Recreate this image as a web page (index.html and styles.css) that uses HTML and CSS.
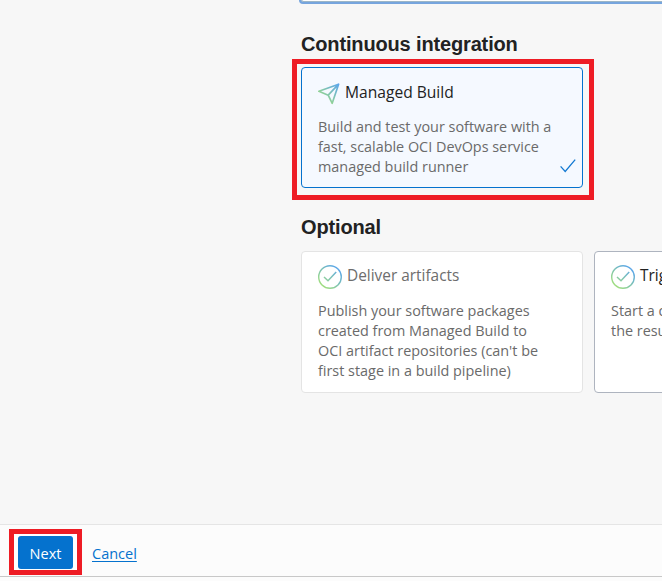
FILE: index.html
```html
<!DOCTYPE html>
<html lang="en">
<head>
<meta charset="utf-8">
<title>Add stage</title>
<link rel="stylesheet" href="styles.css">
</head>
<body>
<svg class="defs" width="0" height="0" aria-hidden="true">
  <defs>
    <linearGradient id="tint" gradientUnits="userSpaceOnUse" x1="4" y1="22" x2="21" y2="3">
      <stop offset="0" stop-color="#a3e07a"/>
      <stop offset="1" stop-color="#5aa5ee"/>
    </linearGradient>
  </defs>
</svg>
<main class="stages">
  <div class="previous-card"></div>
  <h2 class="heading">Continuous integration</h2>
  <section class="card selected">
    <h3 class="card-title managed">
      <svg class="icon" width="24" height="24" viewBox="0 0 24 24"><path d="M.9 10.3 20.6 3.2 14.2 22.3 10.2 14.2ZM10.2 14.2 20.6 3.2" fill="none" stroke="url(#tint)" stroke-width="1.7" stroke-linejoin="round"/></svg>
      <span>Managed Build</span>
    </h3>
    <p class="description">Build and test your software with a<br>fast, scalable OCI DevOps service<br>managed build runner</p>
    <svg class="selected-mark" width="16" height="14" viewBox="0 0 16 14"><path d="M.6 7.4 5.2 12.4 15.2.7" fill="none" stroke="#1279d2" stroke-width="1.3"/></svg>
    <div class="highlight"></div>
  </section>
  <h2 class="heading optional">Optional</h2>
  <div class="row">
    <section class="card disabled">
      <h3 class="card-title">
        <svg class="icon" width="24" height="24" viewBox="0 0 24 24"><path d="M6 12 10 15.8 18.2 7" fill="none" stroke="url(#tint)" stroke-width="1.5"/><circle cx="12" cy="12" r="11.3" fill="none" stroke="url(#tint)" stroke-width="1.4"/></svg>
        <span>Deliver artifacts</span>
      </h3>
      <p class="description">Publish your software packages<br>created from Managed Build to<br>OCI artifact repositories (can't be<br>first stage in a build pipeline)</p>
    </section>
    <section class="card">
      <h3 class="card-title">
        <svg class="icon" width="24" height="24" viewBox="0 0 24 24"><path d="M6 12 10 15.8 18.2 7" fill="none" stroke="url(#tint)" stroke-width="1.5"/><circle cx="12" cy="12" r="11.3" fill="none" stroke="url(#tint)" stroke-width="1.4"/></svg>
        <span>Trigger deployment</span>
      </h3>
      <p class="description">Start a deployment using<br>the results of the build</p>
    </section>
  </div>
</main>
<footer class="actions">
  <div class="next-wrap">
    <button class="next">Next</button>
  </div>
  <a class="cancel" href="#">Cancel</a>
</footer>
</body>
</html>
```
FILE: styles.css
```css
* { box-sizing: border-box; }
body {
  margin: 0;
  height: 581px;
  overflow: hidden;
  display: flex;
  flex-direction: column;
  background: #f7f7f7;
  font-family: "Open Sans", "Noto Sans", sans-serif;
  color: #222;
}
.defs { position: absolute; }
.stages { flex: 1; min-height: 0; padding-left: 301px; overflow: hidden; }
.previous-card {
  height: 4px;
  margin-left: -2px;
  background: #fff;
  border: solid #76a5de;
  border-width: 0 0 2px 2px;
  border-bottom-left-radius: 4px;
  box-shadow: inset 1px -1px #9db6c6;
}
.heading {
  margin: 28px 0 0;
  height: 35px;
  font: bold 20px/24px "Liberation Sans", sans-serif;
  letter-spacing: -.15px;
}
.heading.optional { margin-top: 27px; height: 36px; }
.card {
  position: relative;
  flex: none;
  width: 282px;
  height: 142px;
  padding: 13px 16px;
  background: #fff;
  border: 1px solid #aeb4bf;
  border-radius: 4px;
}
.selected { height: 121px; background: #f5f9ff; border-color: #0572ce; }
.disabled { border-color: #e4e4e4; }
.card-title {
  display: flex;
  align-items: center;
  gap: 5px;
  margin: 0;
  height: 24px;
  font-size: 15.4px;
  font-weight: 400;
  line-height: 22px;
  white-space: nowrap;
}
.card-title span { margin-top: -2px; }
.managed { gap: 3px; font-size: 15.6px; }
.disabled .card-title { color: #6d6d6d; }
.description {
  margin: 12px 0 0;
  font-size: 14.4px;
  line-height: 20px;
  color: #6a6a6a;
  white-space: nowrap;
}
.icon { flex: none; }
.selected-mark { position: absolute; right: 6px; bottom: 14px; }
.highlight {
  position: absolute;
  inset: -9px -12px -13px -10px;
  border: 5px solid #ee1c25;
}
.row { display: flex; gap: 11px; }
.actions {
  height: 57px;
  flex: none;
  display: flex;
  align-items: flex-start;
  padding: 5px 9px;
  background: linear-gradient(#c8c8c8, #c8c8c8) 0 51px / 100% 1px no-repeat #fcfcfc;
  border-top: 1px solid #e5e5e5;
}
.next-wrap {
  width: 73px;
  height: 46px;
  margin-top: -1px;
  padding: 2px 4px;
  border: 5px solid #ee1c25;
  background: #fff;
}
.next {
  display: block;
  width: 55px;
  height: 33px;
  padding: 0;
  border: 0;
  border-radius: 3px;
  background: #0572ce;
  color: #fff;
  font: 14.5px/35px "Open Sans", sans-serif;
}
.cancel {
  margin: 14px 0 0 10px;
  color: #0572ce;
  font-size: 14.5px;
  line-height: 20px;
  text-underline-offset: 2px;
}
```
